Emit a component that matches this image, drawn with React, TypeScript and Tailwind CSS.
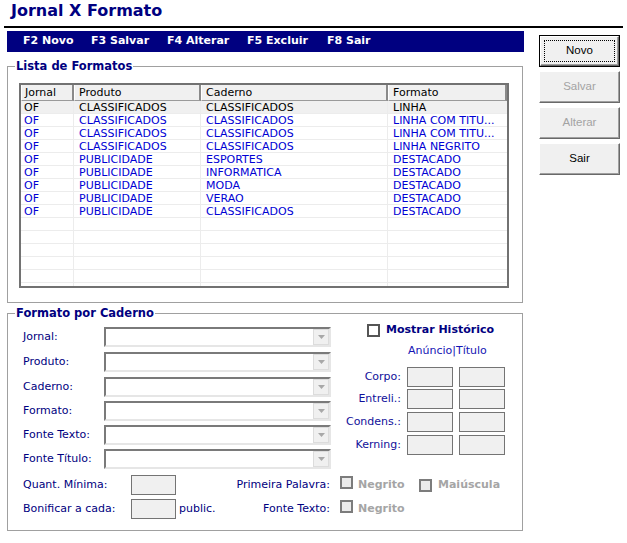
import React from "react";

const ROWS: string[][] = [
  ["OF", "CLASSIFICADOS", "CLASSIFICADOS", "LINHA"],
  ["OF", "CLASSIFICADOS", "CLASSIFICADOS", "LINHA COM TITU..."],
  ["OF", "CLASSIFICADOS", "CLASSIFICADOS", "LINHA COM TITU..."],
  ["OF", "CLASSIFICADOS", "CLASSIFICADOS", "LINHA NEGRITO"],
  ["OF", "PUBLICIDADE", "ESPORTES", "DESTACADO"],
  ["OF", "PUBLICIDADE", "INFORMATICA", "DESTACADO"],
  ["OF", "PUBLICIDADE", "MODA", "DESTACADO"],
  ["OF", "PUBLICIDADE", "VERAO", "DESTACADO"],
  ["OF", "PUBLICIDADE", "CLASSIFICADOS", "DESTACADO"],
];

const EMPTY_ROWS = 6;

function Combo() {
  return (
    <div className="flex h-[20px] w-[227px] justify-end border-2 border-t-[#7a7a7a] border-l-[#7a7a7a] border-r-[#e6e6e6] border-b-[#e6e6e6] bg-white">
      <div className="flex h-full w-[16px] items-center justify-center border border-[#dcdcdc] bg-[#f0f0f0]">
        <svg width="7" height="4" viewBox="0 0 7 4">
          <path d="M0 0 H7 L3.5 4 Z" fill="#a8a8a8" />
        </svg>
      </div>
    </div>
  );
}

function Box({ className = "" }: { className?: string }) {
  return <div className={`h-[20px] w-[46px] border border-[#747474] bg-[#f0f0f0] ${className}`} />;
}

function Check({ disabled }: { disabled?: boolean }) {
  return (
    <span
      className={`inline-block h-[13px] w-[13px] shrink-0 border-2 ${
        disabled ? "border-[#7c7c7c] bg-[#ebebeb]" : "border-[#555555] bg-white"
      }`}
    />
  );
}

function Fieldset({
  legend,
  className,
  children,
}: {
  legend: string;
  className: string;
  children: React.ReactNode;
}) {
  return (
    <div className={`relative border border-[#a0a0a0] ${className}`}>
      <span className="absolute top-[-8px] left-[7px] bg-white px-[1px] text-[11.5px] leading-[14px] font-bold text-[#000080]">
        {legend}
      </span>
      {children}
    </div>
  );
}

function Button({ label, disabled, focused }: { label: string; disabled?: boolean; focused?: boolean }) {
  const bevel =
    "border border-t-white border-l-white border-r-[#696969] border-b-[#696969] shadow-[inset_-1px_-1px_0_#a0a0a0] bg-[#f0f0f0]";
  if (focused) {
    return (
      <div className="h-[32px] w-[81px] border border-black">
        <div className={`relative flex h-full items-center justify-center ${bevel}`}>
          <span className="pointer-events-none absolute inset-[3px] border border-dotted border-black" />
          <span className="font-['Liberation_Sans',sans-serif] text-[11.5px] text-black">{label}</span>
        </div>
      </div>
    );
  }
  return (
    <div className={`flex h-[32px] w-[81px] items-center justify-center ${bevel}`}>
      <span
        className={`font-['Liberation_Sans',sans-serif] text-[11.5px] ${
          disabled ? "text-[#a3a3a3]" : "text-black"
        }`}
      >
        {label}
      </span>
    </div>
  );
}

export default function App() {
  // label text, top margin of the row
  const labels: [string, string][] = [
    ["Jornal:", "mt-0"],
    ["Produto:", "mt-[5px]"],
    ["Caderno:", "mt-[5px]"],
    ["Formato:", "mt-[4px]"],
    ["Fonte Texto:", "mt-[4px]"],
    ["Fonte Título:", "mt-[4px]"],
  ];
  const metrics: [string, string][] = [
    ["Corpo:", "mt-0"],
    ["Entreli.:", "mt-[2px]"],
    ["Condens.:", "mt-[3px]"],
    ["Kerning:", "mt-[3px]"],
  ];

  return (
    <div className="h-[543px] w-[627px] overflow-hidden bg-white font-['DejaVu_Sans',sans-serif] text-[11px] text-[#000080]">
      <h1 className="pl-[11px] text-[16px] leading-[22px] font-bold text-[#000080]">Jornal X Formato</h1>
      <div className="mx-[4px] mt-[4px] border-t-2 border-black" />

      <div className="flex">
        <div className="ml-[7px] w-[517px]">
          <div className="mt-[3px] flex h-[21px] items-center bg-[#000080] pl-[16px] font-bold text-white">
            <span className="w-[68px]">F2 Novo</span>
            <span className="w-[76px]">F3 Salvar</span>
            <span className="w-[80px]">F4 Alterar</span>
            <span className="w-[80px]">F5 Excluir</span>
            <span>F8 Sair</span>
          </div>

          <Fieldset legend="Lista de Formatos" className="mt-[14px] h-[237px] w-[516px] pt-[16px] pl-[11px]">
            <div className="h-[205px] w-[490px] overflow-hidden border-2 border-[#727272] bg-white text-[11px] leading-[13px]">
              <div className="flex h-[16px] text-black">
                {[
                  ["Jornal", "w-[53px] pl-[3px]"],
                  ["Produto", "w-[127px] pl-[4px]"],
                  ["Caderno", "w-[187px] pl-[4px]"],
                  ["Formato", "w-[119px] pl-[4px]"],
                ].map(([t, w]) => (
                  <div
                    key={t}
                    className={`${w} h-[16px] border-l border-l-white border-r-2 border-r-[#8a8a8a] border-b border-b-[#9a9a9a] bg-[#f0f0f0] leading-[15px]`}
                  >
                    {t}
                  </div>
                ))}
              </div>
              {ROWS.concat(Array.from({ length: EMPTY_ROWS }, () => ["", "", "", ""])).map((r, i) => (
                <div
                  key={i}
                  className={`flex h-[13px] border-b border-[#ececec] ${
                    i === 0 ? "bg-[#f0f0f0] text-black" : "text-[#0000d4]"
                  }`}
                >
                  <div className="w-[53px] border-r border-[#ececec] pl-[3px]">{r[0]}</div>
                  <div className="w-[127px] border-r border-[#ececec] pl-[5px]">{r[1]}</div>
                  <div className="w-[187px] border-r border-[#ececec] pl-[5px]">{r[2]}</div>
                  <div className="w-[119px] pl-[5px]">{r[3]}</div>
                </div>
              ))}
            </div>
          </Fieldset>

          <Fieldset legend="Formato por Caderno" className="mt-[10px] h-[218px] w-[516px] pt-[8px] pl-[15px]">
            <div className="flex">
              <div className="mt-[5px] flex flex-col">
                {labels.map(([l, m]) => (
                  <div key={l} className={`flex h-[20px] items-center ${m}`}>
                    <span className="w-[81px]">{l}</span>
                    <Combo />
                  </div>
                ))}
              </div>

              <div className="flex flex-col">
                <div className="ml-[36px] flex h-[16px] items-center gap-[6px]">
                  <Check />
                  <span className="font-bold text-[#000080]">Mostrar Histórico</span>
                </div>
                <div className="mt-[6px] ml-[77px] h-[14px] leading-[14px] text-[#1414b4]">Anúncio|Título</div>
                <div className="mt-[9px] flex flex-col">
                  {metrics.map(([l, m]) => (
                    <div key={l} className={`flex h-[20px] items-center ${m}`}>
                      <span className="w-[71px] pr-[1px] text-right text-[#10109a]">{l}</span>
                      <Box className="ml-[5px]" />
                      <Box className="ml-[6px]" />
                    </div>
                  ))}
                </div>
              </div>
            </div>

            <div className="mt-[6px] flex h-[20px] items-center">
              <span className="w-[108px]">Quant. Mínima:</span>
              <div className="h-[20px] w-[45px] border border-[#747474] bg-[#f0f0f0]" />
              <span className="w-[154px] text-right">Primeira Palavra:</span>
              <span className="ml-[10px]">
                <Check disabled />
              </span>
              <span className="ml-[5px] w-[61px] font-bold text-[#a5a5a5]">Negrito</span>
              <Check disabled />
              <span className="ml-[6px] font-bold text-[#a5a5a5]">Maiúscula</span>
            </div>

            <div className="mt-[4px] flex h-[20px] items-center">
              <span className="w-[108px]">Bonificar a cada:</span>
              <div className="h-[20px] w-[45px] border border-[#747474] bg-[#f0f0f0]" />
              <div className="flex w-[154px]">
                <span className="pl-[3px]">public.</span>
                <span className="ml-auto">Fonte Texto:</span>
              </div>
              <span className="ml-[10px]">
                <Check disabled />
              </span>
              <span className="ml-[5px] font-bold text-[#a5a5a5]">Negrito</span>
            </div>
          </Fieldset>
        </div>

        <div className="mt-[7px] ml-[15px] flex flex-col gap-[4px]">
          <Button label="Novo" focused />
          <Button label="Salvar" disabled />
          <Button label="Alterar" disabled />
          <Button label="Sair" />
        </div>
      </div>
    </div>
  );
}
